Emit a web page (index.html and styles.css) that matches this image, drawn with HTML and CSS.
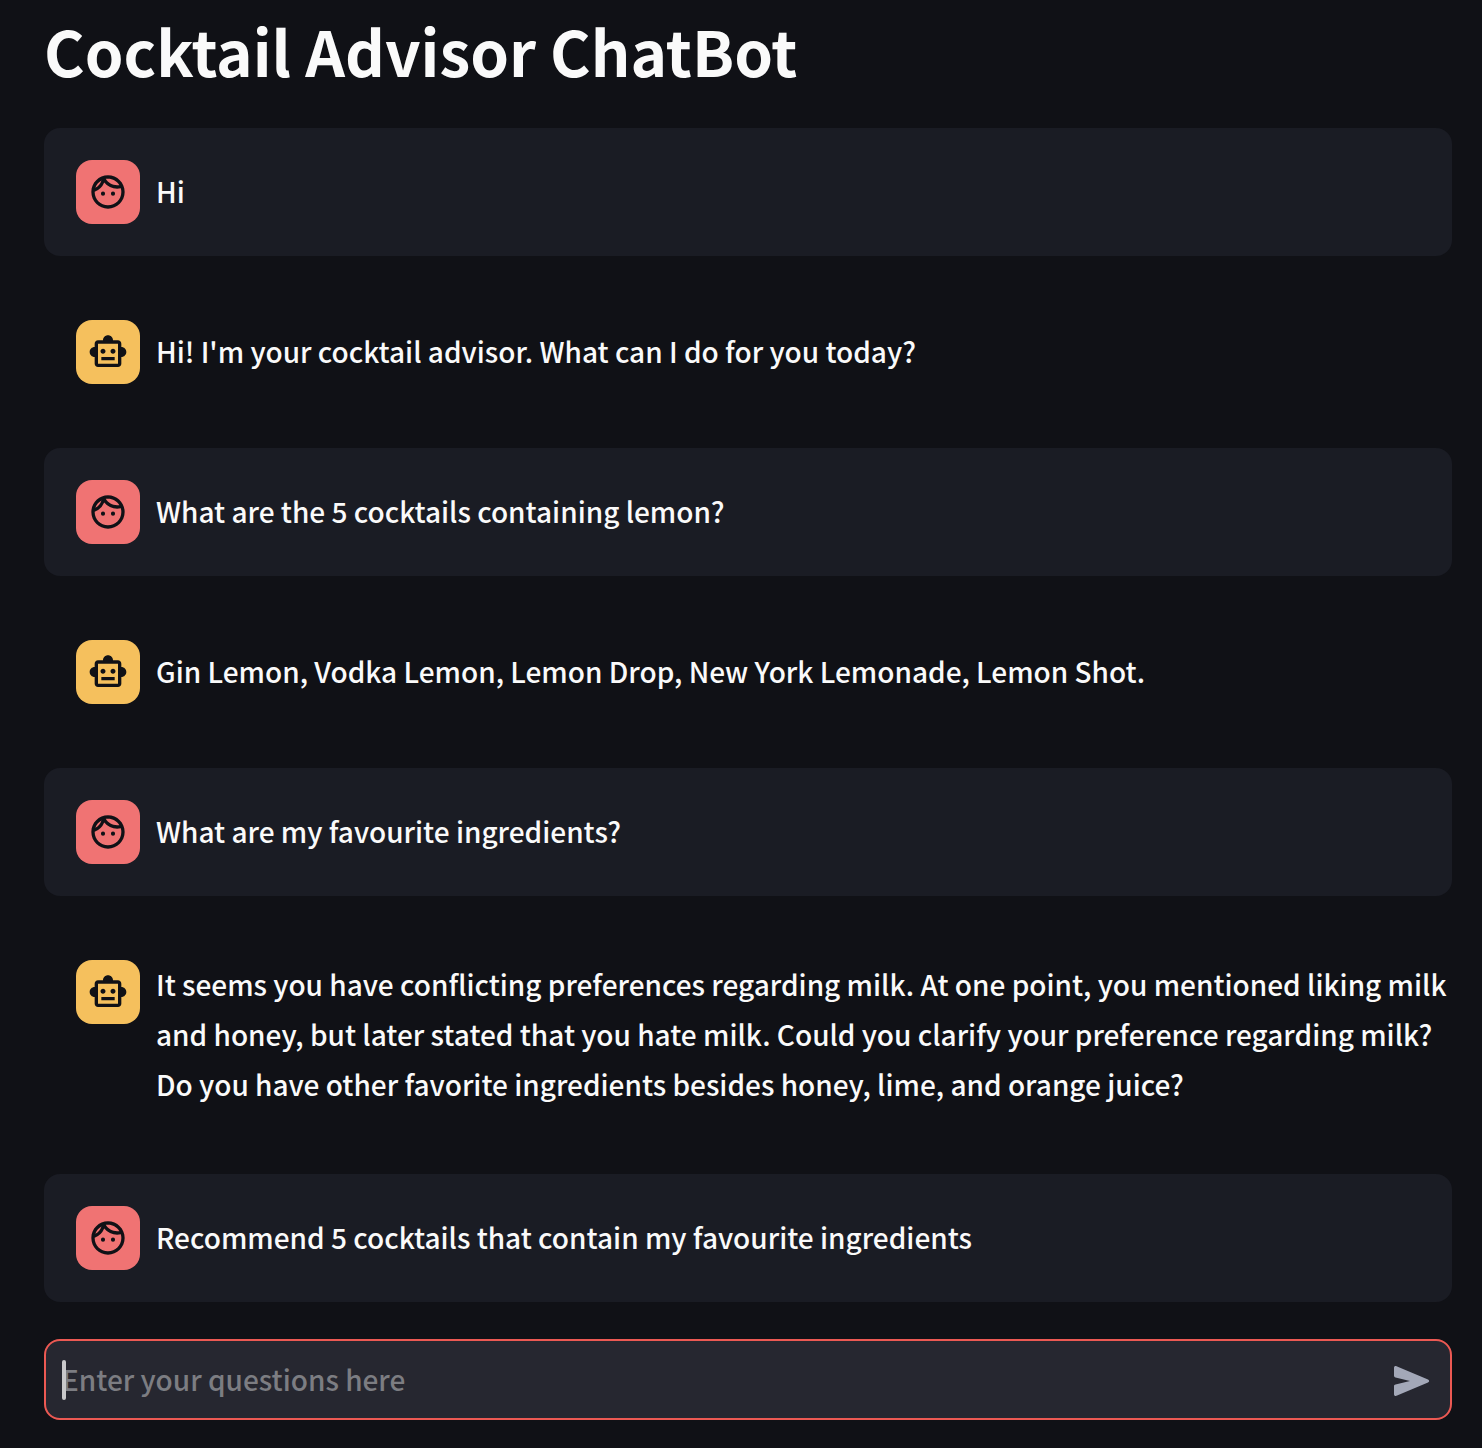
FILE: index.html
```
<!DOCTYPE html>
<html lang="en">
<head>
<meta charset="utf-8">
<title>Cocktail Advisor ChatBot</title>
<meta name="viewport" content="width=device-width, initial-scale=1">
<link rel="stylesheet" href="styles.css">
</head>
<body>
<svg class="sprite" aria-hidden="true">
  <symbol id="face" viewBox="0 0 24 24">
    <path fill="currentColor" d="M10.250 13a1.250 1.250 0 1 1-2.500 0 1.250 1.250 0 0 1 2.500 0zM15 11.750a1.250 1.250 0 1 0 0 2.500 1.250 1.250 0 0 0 0-2.500zM22 12c0 5.520-4.480 10-10 10S2 17.520 2 12 6.480 2 12 2s10 4.480 10 10zM10.660 4.120C12.060 6.440 14.600 8 17.500 8c.46 0 .91-.05 1.340-.12C17.440 5.560 14.900 4 12 4c-.46 0-.91.05-1.340.12zM4.420 9.470a8.046 8.046 0 0 0 3.660-4.440 8.046 8.046 0 0 0-3.660 4.440zM20 12c0-.78-.12-1.530-.33-2.240-.7.15-1.420.24-2.170.24a10 10 0 0 1-7.760-3.690A10.016 10.016 0 0 1 4 11.860c.01.04 0 .09 0 .14 0 4.410 3.590 8 8 8s8-3.590 8-8z"/>
  </symbol>
  <symbol id="robot" viewBox="0 0 24 24">
    <path fill="currentColor" d="M20 9V7c0-1.100-.9-2-2-2h-3c0-1.660-1.340-3-3-3S9 3.340 9 5H6c-1.100 0-2 .9-2 2v2c-1.660 0-3 1.340-3 3s1.340 3 3 3v4c0 1.100.9 2 2 2h12c1.100 0 2-.9 2-2v-4c1.660 0 3-1.340 3-3s-1.340-3-3-3zm-2 10H6V7h12v12zm-9-6c-.83 0-1.500-.67-1.500-1.500S8.170 10 9 10s1.500.67 1.500 1.500S9.830 13 9 13zm7.500-1.500c0 .83-.67 1.500-1.500 1.500s-1.500-.67-1.500-1.500.67-1.500 1.500-1.500 1.500.67 1.500 1.500zM8 15h8v2H8v-2z"/>
  </symbol>
</svg>
<main class="app">
  <h1 class="title">Cocktail Advisor ChatBot</h1>
  <section class="chat" aria-label="Conversation">
    <article class="message message-user"><span class="avatar"><svg class="icon"><use href="#face"/></svg></span><p class="text">Hi</p></article>
    <article class="message message-bot"><span class="avatar"><svg class="icon"><use href="#robot"/></svg></span><p class="text">Hi! I'm your cocktail advisor. What can I do for you today?</p></article>
    <article class="message message-user"><span class="avatar"><svg class="icon"><use href="#face"/></svg></span><p class="text">What are the 5 cocktails containing lemon?</p></article>
    <article class="message message-bot"><span class="avatar"><svg class="icon"><use href="#robot"/></svg></span><p class="text">Gin Lemon, Vodka Lemon, Lemon Drop, New York Lemonade, Lemon Shot.</p></article>
    <article class="message message-user"><span class="avatar"><svg class="icon"><use href="#face"/></svg></span><p class="text">What are my favourite ingredients?</p></article>
    <article class="message message-bot"><span class="avatar"><svg class="icon"><use href="#robot"/></svg></span><p class="text">It seems you have conflicting preferences regarding milk. At one point, you mentioned liking milk and honey, but later stated that you hate milk. Could you clarify your preference regarding milk? Do you have other favorite ingredients besides honey, lime, and orange juice?</p></article>
    <article class="message message-user"><span class="avatar"><svg class="icon"><use href="#face"/></svg></span><p class="text">Recommend 5 cocktails that contain my favourite ingredients</p></article>
  </section>
  <form class="composer">
    <span class="caret" aria-hidden="true"></span>
    <input class="field" type="text" aria-label="Your question" placeholder="Enter your questions here">
    <button class="send" type="button" aria-label="Send">
      <svg class="send-icon" viewBox="0 0 36 30"><path fill="currentColor" d="M0 1.800C0 .4 1.200-.3 2.500.2L34 13.500c1.600.7 1.600 2.300 0 3L2.500 29.800C1.200 30.300 0 29.600 0 28.200V20.300C0 19.400.6 18.800 1.500 18.600L16 15 1.500 11.400C.6 11.200 0 10.600 0 9.700z"/></svg>
    </button>
  </form>
</main>
</body>
</html>
```
FILE: styles.css
```
* { box-sizing: border-box; }
body {
  margin: 0;
  background: #101116;
  color: #fafafa;
  font-family: "Noto Sans CJK SC", "Noto Sans", sans-serif;
  font-size: 28px;
  font-weight: 500;
  line-height: 50px;
}
.sprite { position: absolute; width: 0; height: 0; }
.app { padding: 0 30px 28px 44px; }
.title {
  margin: 0;
  padding: 6px 0 34px;
  font-size: 62px;
  line-height: 88px;
  font-weight: 700;
}
.chat { display: flex; flex-direction: column; gap: 32px; }
.message {
  display: flex;
  align-items: flex-start;
  gap: 16px;
  padding: 32px;
  border-radius: 16px;
}
.message-user { background: #1a1c24; }
.message-bot { padding-right: 0; }
.avatar {
  flex: none;
  display: grid;
  place-items: center;
  width: 64px;
  height: 64px;
  border-radius: 16px;
  color: #101116;
}
.message-user .avatar { background: #f07373; }
.message-bot .avatar { background: #f5c05d; }
.icon { width: 40px; height: 40px; }
.text { flex: 1; align-self: center; margin: -1px 0 1px; }
.composer {
  position: relative;
  display: flex;
  align-items: center;
  height: 81px;
  margin-top: 37px;
  border: 2px solid #ec5953;
  border-radius: 16px;
  background: #262730;
}
.caret {
  position: absolute;
  left: 16px;
  top: 19px;
  width: 4px;
  height: 40px;
  border-radius: 2px;
  background: #c8c8ca;
}
.field {
  flex: 1;
  min-width: 0;
  height: 100%;
  padding: 0 16px 1px;
  border: 0;
  outline: 0;
  background: none;
  color: inherit;
  font: inherit;
}
.field::placeholder { color: #7c7d82; opacity: 1; }
.send {
  display: grid;
  place-items: center;
  width: 76px;
  height: 100%;
  padding: 3px 0 0;
  border: 0;
  background: none;
  color: #a3a8b8;
}
.send-icon { width: 36px; height: 30px; }
```
